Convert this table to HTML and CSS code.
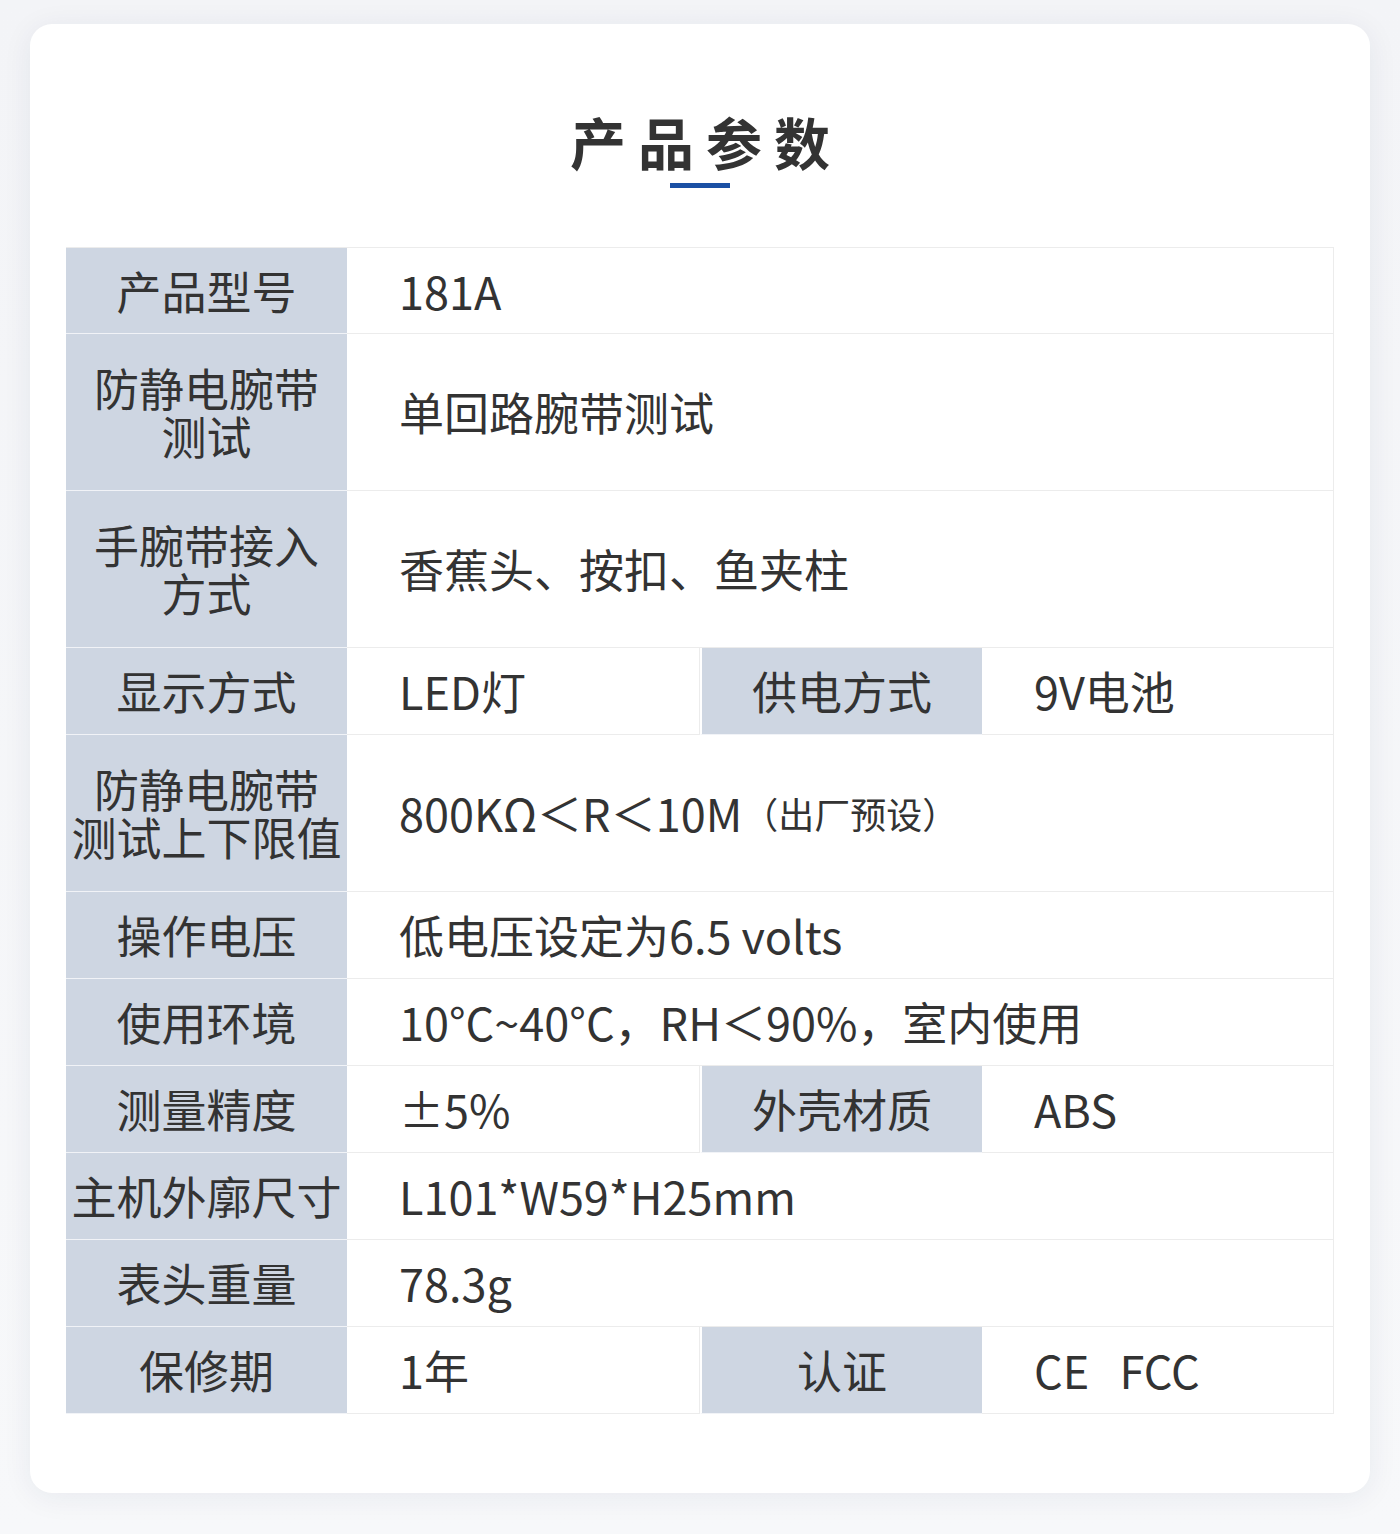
FILE: index.html
```html
<!DOCTYPE html>
<html lang="zh-CN">
<head>
<meta charset="utf-8">
<title>产品参数</title>
<link rel="stylesheet" href="styles.css">
</head>
<body>
<div class="page">
  <section class="card">
    <h1 class="title">产品参数</h1>
    <div class="bar"></div>
    <div class="spec">
      <div class="lbl">产品型号</div>
      <div class="val span3">181A</div>

      <div class="lbl">防静电腕带<br>测试</div>
      <div class="val span3">单回路腕带测试</div>

      <div class="lbl">手腕带接入<br>方式</div>
      <div class="val span3">香蕉头、按扣、鱼夹柱</div>

      <div class="lbl">显示方式</div>
      <div class="val">LED灯</div>
      <div class="lbl lbl2">供电方式</div>
      <div class="val">9V电池</div>

      <div class="lbl">防静电腕带<br>测试上下限值</div>
      <div class="val span3">800KΩ＜R＜10M<span class="note">（出厂预设）</span></div>

      <div class="lbl">操作电压</div>
      <div class="val span3">低电压设定为6.5 volts</div>

      <div class="lbl">使用环境</div>
      <div class="val span3">10°C~40°C，RH＜90%，室内使用</div>

      <div class="lbl">测量精度</div>
      <div class="val">±5%</div>
      <div class="lbl lbl2">外壳材质</div>
      <div class="val">ABS</div>

      <div class="lbl">主机外廓尺寸</div>
      <div class="val span3">L101*W59*H25mm</div>

      <div class="lbl">表头重量</div>
      <div class="val span3">78.3g</div>

      <div class="lbl">保修期</div>
      <div class="val">1年</div>
      <div class="lbl lbl2">认证</div>
      <div class="val">CE&nbsp;&nbsp;&nbsp;FCC</div>
    </div>
  </section>
</div>
</body>
</html>
```

FILE: styles.css
```css
html, body {
  margin: 0;
  padding: 0;
}
body {
  background: #f4f5f8;
  font-family: "Noto Sans CJK SC", "Noto Sans", sans-serif;
  color: #333333;
}
.page {
  width: 1400px;
  height: 1534px;
  padding: 24px 30px 0;
  box-sizing: border-box;
  background: linear-gradient(#f3f4f7, #f7f8fa);
}
.card {
  width: 1340px;
  height: 1469px;
  background: #ffffff;
  border-radius: 22px;
  box-shadow: 0 4px 30px rgba(30, 45, 90, 0.07);
  padding-top: 87px;
  box-sizing: border-box;
  display: flex;
  flex-direction: column;
  align-items: center;
}
.title {
  margin: 0;
  font-size: 56px;
  line-height: 60px;
  height: 60px;
  font-weight: 700;
  letter-spacing: 12px;
  padding-left: 12px;
  color: #333333;
}
.bar {
  width: 60px;
  height: 5px;
  background: #1b50a4;
  margin-top: 12px;
}
.spec {
  margin-top: 59px;
  width: 1268px;
  display: grid;
  grid-template-columns: 281px 353px 282px 352px;
  grid-template-rows: 86px 157px 157px 87px 157px repeat(6, 87px);
  border-top: 1px solid #ececec;
  border-right: 1px solid #ececec;
  box-sizing: border-box;
}
.lbl, .val {
  font-size: 45px;
  line-height: 48px;
  display: flex;
  align-items: center;
  border-bottom: 1px solid #ececec;
  box-sizing: border-box;
  white-space: nowrap;
}
.lbl {
  background: #ced6e2;
  justify-content: center;
  text-align: center;
  border-bottom-color: #f1f3f7;
}
.lbl2 {
  border-left: 2px solid #ffffff;
}
.val {
  padding-left: 52px;
  border-right: 1px solid #ececec;
}
.span3 {
  grid-column: span 3;
}
.note {
  font-size: 36px;
}
```
